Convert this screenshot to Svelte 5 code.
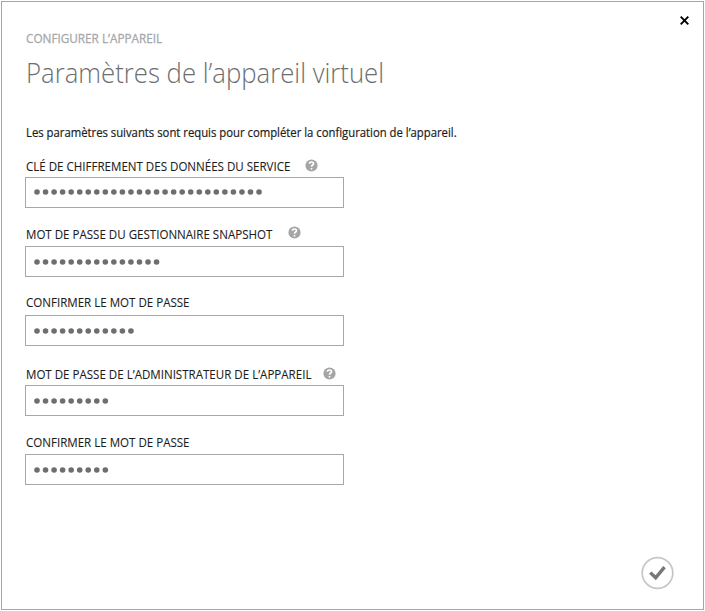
<script>
  const fields = [
    { label: 'CLÉ DE CHIFFREMENT DES DONNÉES DU SERVICE', help: true, dots: 27, kind: 'key' },
    { label: 'MOT DE PASSE DU GESTIONNAIRE SNAPSHOT', help: true, dots: 15, kind: 'snapshot' },
    { label: 'CONFIRMER LE MOT DE PASSE', help: false, dots: 12, kind: 'confirm' },
    { label: 'MOT DE PASSE DE L’ADMINISTRATEUR DE L’APPAREIL', help: true, dots: 9, kind: 'admin' },
    { label: 'CONFIRMER LE MOT DE PASSE', help: false, dots: 9, kind: 'confirm-admin' }
  ];
</script>

<main class="dialog">
  <button class="close" aria-label="Fermer">
    <svg width="9" height="9" viewBox="0 0 9 9"><path d="M.7 .7L8.3 8.3M8.3 .7L.7 8.3" stroke="#000" stroke-width="1.9" /></svg>
  </button>
  <header>
    <p class="eyebrow"><span>CONFIGURER L’APPAREIL</span></p>
    <h1><span>Paramètres de l’appareil virtuel</span></h1>
  </header>
  <p class="intro"><span>Les paramètres suivants sont requis pour compléter la configuration de l’appareil.</span></p>
  <form>
    {#each fields as field}
      <section class={field.kind}>
        <div class="label">
          <span class="text">{field.label}</span>
          {#if field.help}
            <svg class="help" width="13" height="13" viewBox="0 0 13 13">
              <circle cx="6.5" cy="6.5" r="6.1" fill="#a5a5a5" />
              <path d="M4.4 4.7C4.6 2.4 8.6 2.5 8.5 4.7C8.4 6 6.5 6.1 6.5 7.8M6.5 8.9V10.6" fill="none" stroke="#fff" stroke-width="1.7" />
            </svg>
          {/if}
        </div>
        <div class="input">
          <svg width="240" height="8" viewBox="0 0 240 8">
            {#each Array(field.dots) as _, i}
              <circle cx={4 + i * 8.54} cy="4" r="2.8" fill="#6d6e70" />
            {/each}
          </svg>
        </div>
      </section>
    {/each}
  </form>
  <button class="done" aria-label="Terminer">
    <svg width="34" height="34" viewBox="0 0 34 34">
      <circle cx="16.5" cy="17" r="15.3" fill="#fff" stroke="#c6c6c6" stroke-width="1.7" />
      <path d="M9.3 16.6L14.7 21.8L23.5 11.2" fill="none" stroke="#777" stroke-width="3.4" />
    </svg>
  </button>
</main>

<style>
  :global(body) { background: #fff; }
  .dialog {
    box-sizing: border-box;
    position: relative;
    width: 703px;
    height: 609px;
    margin: 1px;
    padding: 0 0 0 23px;
    border: 1px solid #a6a6a6;
    overflow: hidden;
    font-family: "Open Sans", "Noto Sans", sans-serif;
    color: #1c1c1c;
  }
  button { position: absolute; display: block; padding: 0; border: 0; background: none; }
  button svg { display: block; }
  .close { top: 14px; right: 14px; }
  .done { right: 28px; bottom: 19px; }
  p, h1 { margin: 0; white-space: nowrap; }
  p span, h1 span, .text { display: inline-block; transform-origin: 0 50%; }
  .eyebrow { margin: 28px 0 0 0.5px; font-size: 12.5px; line-height: 18px; color: #a6a8ab; }
  .eyebrow span { transform: scaleX(0.94); -webkit-text-stroke: 0.3px; }
  h1 { margin: 4px 0 0 0.5px; font-size: 28px; line-height: 40px; font-weight: 300; color: #6d6e70; }
  h1 span { transform: scaleX(0.919); }
  .intro { margin: 32px 0 0 1px; font-size: 12px; line-height: 18px; }
  .intro span { transform: scaleX(0.942); -webkit-text-stroke: 0.2px; }
  form { margin-top: 15px; }
  section { box-sizing: border-box; height: 69px; }
  .confirm { height: 70px; }
  .label { display: flex; height: 20px; padding-left: 0.5px; font-size: 12.5px; line-height: 20px; white-space: nowrap; }
  .label .text { flex: none; transform: scaleX(0.924); -webkit-text-stroke: 0.1px; }
  .key .text { width: 265px; }
  .snapshot .text { width: 246px; margin-top: -1px; }
  .confirm .text { margin-top: -2px; }
  .admin .text { width: 285px; }
  .confirm-admin .text { margin-top: -1px; }
  .help { flex: none; margin: 2px 0 0 14.5px; }
  .snapshot .help { margin: 0 0 0 16.5px; }
  .admin .help { margin: 2px 0 0 12.5px; }
  .input { box-sizing: border-box; display: flex; align-items: center; width: 319px; height: 31px; padding-left: 7px; border: 1px solid #a6a8ab; }
  .key .input { padding-bottom: 1px; }
</style>
